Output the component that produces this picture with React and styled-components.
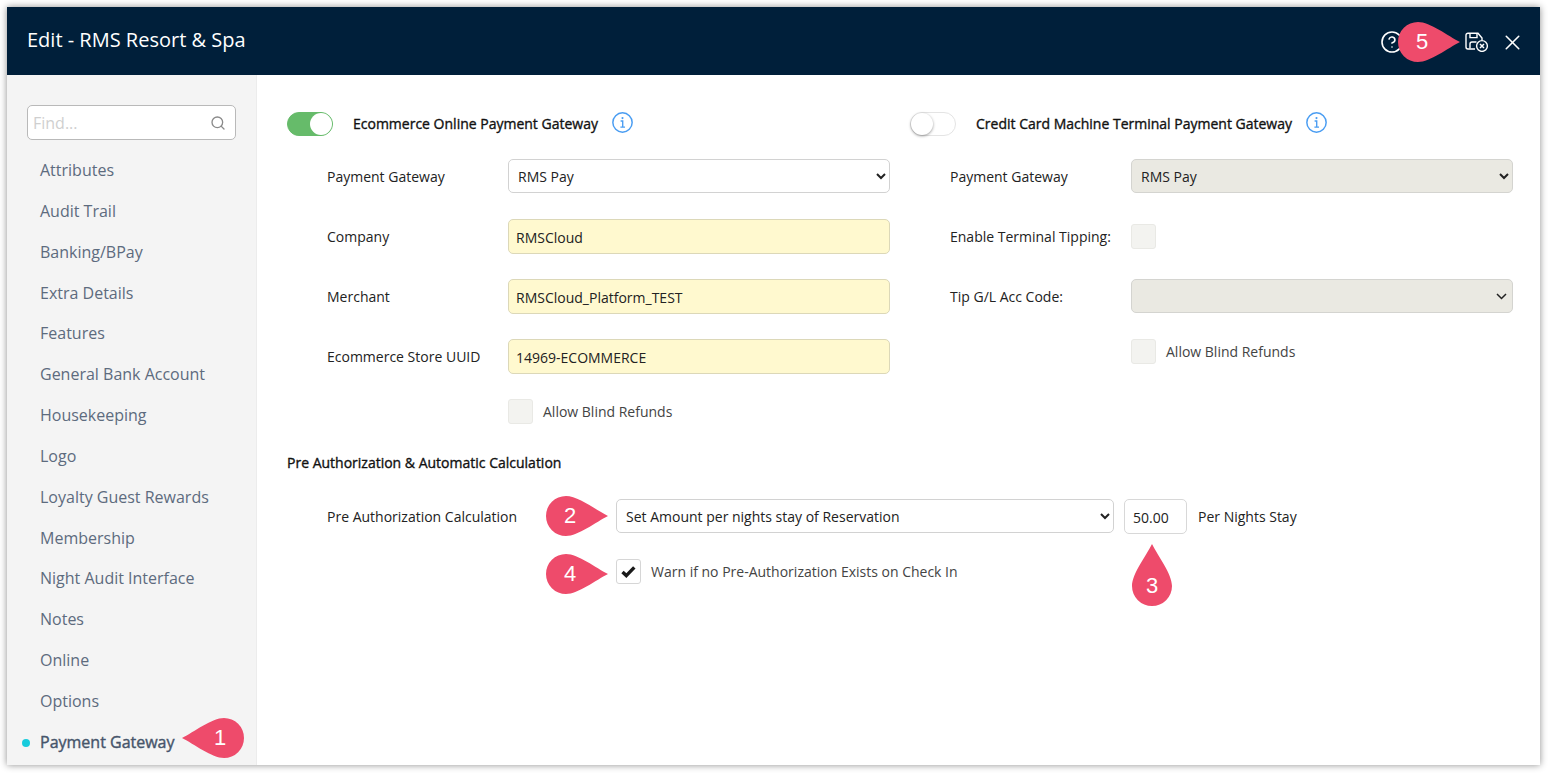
import React from 'react';
import styled, { createGlobalStyle } from 'styled-components';
import { CircleHelp, Search, X } from 'lucide-react';

const GlobalStyle = createGlobalStyle`
  html, body { margin: 0; padding: 0; background: #fff; }
  body { font-family: "Open Sans", "Liberation Sans", sans-serif; font-size: 14px; color: #222; }
`;

const Page = styled.div`
  width: 1548px;
  height: 773px;
  padding: 7px 8px 8px 7px;
  box-sizing: border-box;
  overflow: hidden;
`;

const Window = styled.div`
  position: relative;
  display: flex;
  flex-direction: column;
  width: 1533px;
  height: 758px;
  background: #fff;
  box-shadow: 0 0 7px rgba(0, 0, 0, 0.45);
`;

const Header = styled.header`
  display: flex;
  align-items: center;
  height: 68px;
  flex: none;
  padding: 0 15px 0 20px;
  background: #001f3a;
  color: #fff;
`;

const Title = styled.h1`
  margin: 0 auto 4px 0;
  font-size: 20px;
  font-weight: 400;
`;

const HeaderIcon = styled.span`
  display: flex;
  margin-left: ${(p) => p.$gap || 0}px;
  margin-top: 2px;
`;

const Body = styled.div`
  display: flex;
  flex: 1;
  min-height: 0;
`;

const Sidebar = styled.aside`
  width: 250px;
  flex: none;
  box-sizing: border-box;
  padding: 30px 20px 0;
  overflow: hidden;
  background: #f4f4f4;
  border-right: 1px solid #ececec;
`;

const SearchBox = styled.div`
  position: relative;
  height: 35px;
  width: 209px;
  margin-bottom: 10px;
`;

const SearchInput = styled.input`
  width: 100%;
  height: 100%;
  box-sizing: border-box;
  padding: 0 30px 0 5px;
  border: 1px solid #b9b9b9;
  border-radius: 5px;
  background: #fff;
  font: 400 16px "Open Sans", sans-serif;
  outline: none;
  &::placeholder { color: #cfcfcf; opacity: 1; }
`;

const SearchGlyph = styled(Search)`
  position: absolute;
  right: 10px;
  top: 10px;
  color: #8a8a8a;
`;

const NavList = styled.nav`
  display: flex;
  flex-direction: column;
`;

const NavItem = styled.a`
  position: relative;
  display: block;
  height: 40.85px;
  line-height: 40.85px;
  padding-left: 13px;
  font-size: 16px;
  white-space: nowrap;
  color: ${(p) => (p.$active ? '#46556b' : '#5d6b7e')};
  -webkit-text-stroke: ${(p) => (p.$active ? '0.4px' : '0')};

  ${(p) =>
    p.$active &&
    `&::before {
      content: '';
      position: absolute;
      left: -5px;
      top: 17px;
      width: 8px;
      height: 8px;
      border-radius: 50%;
      background: #17cbdc;
    }`}
`;

const Main = styled.main`
  flex: 1;
  padding: 37px 27px 0 30px;
`;

const Columns = styled.div`
  display: grid;
  grid-template-columns: 603px 603px;
  column-gap: 20px;
`;

const Column = styled.section`
  display: flex;
  flex-direction: column;
`;

const ToggleRow = styled.div`
  display: flex;
  align-items: center;
  height: 24px;
  margin-bottom: 23px;
`;

const Toggle = styled.span`
  position: relative;
  display: block;
  width: 46px;
  height: 24px;
  box-sizing: border-box;
  border-radius: 12px;
  flex: none;
  background: ${(p) => (p.$on ? '#66bb6a' : '#fff')};
  border: 1px solid ${(p) => (p.$on ? '#66bb6a' : '#e4e4e4')};

  &::after {
    content: '';
    position: absolute;
    top: 0;
    left: ${(p) => (p.$on ? '22px' : '0')};
    width: 22px;
    height: 22px;
    border-radius: 50%;
    background: #fff;
    box-shadow: ${(p) => (p.$on ? 'none' : '0 1px 3px rgba(0, 0, 0, 0.4)')};
  }
`;

const ToggleLabel = styled.span`
  margin: 0 0 2px 20px;
  color: #111;
  -webkit-text-stroke: 0.35px;
`;

const InfoIcon = styled.svg`
  margin: 0 0 3px 14px;
  flex: none;
`;

const FormRow = styled.div`
  display: grid;
  grid-template-columns: 181px 382px;
  align-items: center;
  height: 34px;
  padding-left: 40px;
  margin-bottom: 26px;
`;

const Label = styled.label`
  color: #222;
`;

const Select = styled.select`
  width: 100%;
  height: 34px;
  box-sizing: border-box;
  padding: 0 0 0 5px;
  border: 1px solid ${(p) => (p.disabled ? '#d4d4d0' : '#d2d2d2')};
  border-radius: 5px;
  background-color: ${(p) => (p.disabled ? '#eae9e2' : '#fff')};
  font: 400 14px "Open Sans", sans-serif;
  color: #222;
  opacity: 1;
`;

// the empty select in the reference has a thinner chevron than the native one
const PlainSelect = styled(Select)`
  appearance: none;
  background-image: url("data:image/svg+xml,%3Csvg xmlns='http://www.w3.org/2000/svg' width='11' height='7'%3E%3Cpath d='M1 1l4.5 4.5L10 1' fill='none' stroke='%23222' stroke-width='1.5'/%3E%3C/svg%3E");
  background-repeat: no-repeat;
  background-position: right 5px center;
`;

const TextInput = styled.input`
  width: 100%;
  height: 35px;
  box-sizing: border-box;
  padding: 1px 7px 0;
  border: 1px solid #dcd8b8;
  border-radius: 5px;
  background: #fff9cf;
  font: 400 14px "Open Sans", sans-serif;
  color: #222;
`;

const Box = styled.span`
  display: flex;
  align-items: center;
  justify-content: center;
  width: 25px;
  height: 25px;
  box-sizing: border-box;
  flex: none;
  border-radius: 3px;
  border: 1px solid ${(p) => (p.$checked ? '#d6d6d6' : '#e9e9e5')};
  background: ${(p) => (p.$checked ? '#fff' : '#f3f3f0')};
`;

const CheckRow = styled.div`
  display: flex;
  align-items: center;
  gap: 10px;
  height: 25px;
  padding-left: ${(p) => p.$indent}px;
  margin-top: ${(p) => p.$top || 0}px;
  color: #444;
`;

const SectionTitle = styled.h2`
  margin: 29px 0 26px;
  font-size: 14px;
  line-height: 20px;
  font-weight: 400;
  color: #111;
  -webkit-text-stroke: 0.35px;
`;

const PreAuthRow = styled.div`
  display: flex;
  align-items: flex-start;
  height: 34px;
  padding-left: 40px;
  line-height: 36px;
`;

const PreAuthLabel = styled(Label)`
  width: 289px;
  flex: none;
`;

const PreAuthSelect = styled(Select)`
  width: 498px;
  flex: none;
  padding-left: 5px;
`;

const AmountInput = styled.input`
  width: 63px;
  height: 35px;
  box-sizing: border-box;
  flex: none;
  margin-left: 10px;
  padding: 1px 8px 0;
  border: 1px solid #d8d8d8;
  border-radius: 5px;
  font: 400 14px "Open Sans", sans-serif;
  color: #222;
`;

const Suffix = styled.span`
  margin-left: 11px;
`;

const MarkerWrap = styled.div`
  position: absolute;
  left: ${(p) => p.$x}px;
  top: ${(p) => p.$y}px;
  width: ${(p) => (p.$up ? 40 : 62)}px;
  height: ${(p) => (p.$up ? 62 : 40)}px;
`;

const MarkerShape = styled.svg`
  display: block;
  transform: ${(p) => p.$turn || 'none'};
  transform-origin: 31px 20px;
`;

const MarkerNum = styled.span`
  position: absolute;
  left: ${(p) => p.$l}px;
  top: ${(p) => p.$t}px;
  width: 40px;
  text-align: center;
  font: 400 22px/40px "Liberation Sans", Arial, sans-serif;
  color: #fff;
`;

const Marker = ({ n, x, y, dir }) => {
  const up = dir === 'up';
  const left = dir === 'left';
  const numLeft = up ? 0 : left ? 18 : 4;
  return (
    <MarkerWrap $x={x} $y={y} $up={up}>
      {up ? (
        <svg width="40" height="62" viewBox="0 0 40 62">
          <path d="M20 0C26 12 40 30 40 42A20 20 0 0 1 0 42C0 30 14 12 20 0Z" fill="#ee4b6b" />
        </svg>
      ) : (
        <MarkerShape width="62" height="40" viewBox="0 0 62 40" $turn={left ? 'scaleX(-1)' : undefined}>
          <path d="M20 0C32 0 50 14 62 20C50 26 32 40 20 40A20 20 0 0 1 20 0Z" fill="#ee4b6b" />
        </MarkerShape>
      )}
      <MarkerNum $l={numLeft} $t={up ? 22 : 0}>{n}</MarkerNum>
    </MarkerWrap>
  );
};

const Info = () => (
  <InfoIcon width="21" height="21" viewBox="0 0 20 20" fill="none" stroke="#4a9df2">
    <circle cx="10" cy="10" r="9.2" strokeWidth="1.4" />
    <circle cx="10" cy="5.8" r="1" fill="#4a9df2" stroke="none" />
    <path d="M8.2 8.6H10.2V14.2M8 14.4H12.4" strokeWidth="1.3" />
  </InfoIcon>
);

const SaveCancel = () => (
  <svg width="24" height="20" viewBox="0 0 24 20" fill="none" stroke="#fff" strokeWidth="1.4">
    <path d="M17 8V6L13 1.2H3A2 2 0 0 0 1 3.2V15A2 2 0 0 0 3 17H10" />
    <path d="M5 1.5V5.6H12V1.5" />
    <path d="M11.5 10H7A2 2 0 0 0 5 12V16.5" />
    <circle cx="17" cy="14" r="5.4" />
    <path d="M15 12L19 16M19 12L15 16" strokeWidth="1.5" />
  </svg>
);

const Tick = () => (
  <svg width="15" height="13" viewBox="0 0 15 13">
    <path d="M1.5 7L5.3 10.6L13.3 2.4" fill="none" stroke="#1a1a1a" strokeWidth="3.4" />
  </svg>
);

const navItems = [
  'Attributes', 'Audit Trail', 'Banking/BPay', 'Extra Details', 'Features',
  'General Bank Account', 'Housekeeping', 'Logo', 'Loyalty Guest Rewards',
  'Membership', 'Night Audit Interface', 'Notes', 'Online', 'Options', 'Payment Gateway',
];

export default function App() {
  return (
    <>
      <GlobalStyle />
      <Page>
        <Window>
          <Header>
            <Title>Edit - RMS Resort &amp; Spa</Title>
            <HeaderIcon><CircleHelp size={24} strokeWidth={1.6} /></HeaderIcon>
            <HeaderIcon $gap={61}><SaveCancel /></HeaderIcon>
            <HeaderIcon $gap={11}><X size={25} strokeWidth={1.5} /></HeaderIcon>
          </Header>
          <Body>
            <Sidebar>
              <SearchBox>
                <SearchInput placeholder="Find..." readOnly />
                <SearchGlyph size={16} />
              </SearchBox>
              <NavList>
                {navItems.map((item) => (
                  <NavItem key={item} $active={item === 'Payment Gateway'}>{item}</NavItem>
                ))}
              </NavList>
            </Sidebar>
            <Main>
              <Columns>
                <Column>
                  <ToggleRow>
                    <Toggle $on />
                    <ToggleLabel>Ecommerce Online Payment Gateway</ToggleLabel>
                    <Info />
                  </ToggleRow>
                  <FormRow>
                    <Label>Payment Gateway</Label>
                    <Select defaultValue="RMS Pay"><option>RMS Pay</option></Select>
                  </FormRow>
                  <FormRow>
                    <Label>Company</Label>
                    <TextInput defaultValue="RMSCloud" />
                  </FormRow>
                  <FormRow>
                    <Label>Merchant</Label>
                    <TextInput defaultValue="RMSCloud_Platform_TEST" />
                  </FormRow>
                  <FormRow>
                    <Label>Ecommerce Store UUID</Label>
                    <TextInput defaultValue="14969-ECOMMERCE" />
                  </FormRow>
                  <CheckRow $indent={221}>
                    <Box />
                    Allow Blind Refunds
                  </CheckRow>
                </Column>
                <Column>
                  <ToggleRow>
                    <Toggle />
                    <ToggleLabel>Credit Card Machine Terminal Payment Gateway</ToggleLabel>
                    <Info />
                  </ToggleRow>
                  <FormRow>
                    <Label>Payment Gateway</Label>
                    <Select disabled defaultValue="RMS Pay"><option>RMS Pay</option></Select>
                  </FormRow>
                  <FormRow>
                    <Label>Enable Terminal Tipping:</Label>
                    <Box />
                  </FormRow>
                  <FormRow>
                    <Label>Tip G/L Acc Code:</Label>
                    <PlainSelect disabled />
                  </FormRow>
                  <CheckRow $indent={221}>
                    <Box />
                    Allow Blind Refunds
                  </CheckRow>
                </Column>
              </Columns>
              <SectionTitle>Pre Authorization &amp; Automatic Calculation</SectionTitle>
              <PreAuthRow>
                <PreAuthLabel>Pre Authorization Calculation</PreAuthLabel>
                <PreAuthSelect defaultValue="a"><option value="a">Set Amount per nights stay of Reservation</option></PreAuthSelect>
                <AmountInput defaultValue="50.00" />
                <Suffix>Per Nights Stay</Suffix>
              </PreAuthRow>
              <CheckRow $indent={329} $top={26}>
                <Box $checked><Tick /></Box>
                Warn if no Pre-Authorization Exists on Check In
              </CheckRow>
            </Main>
          </Body>
          <Marker n="1" x={175} y={711} dir="left" />
          <Marker n="2" x={539} y={489} />
          <Marker n="3" x={1125} y={537} dir="up" />
          <Marker n="4" x={539} y={547} />
          <Marker n="5" x={1391} y={15} />
        </Window>
      </Page>
    </>
  );
}
